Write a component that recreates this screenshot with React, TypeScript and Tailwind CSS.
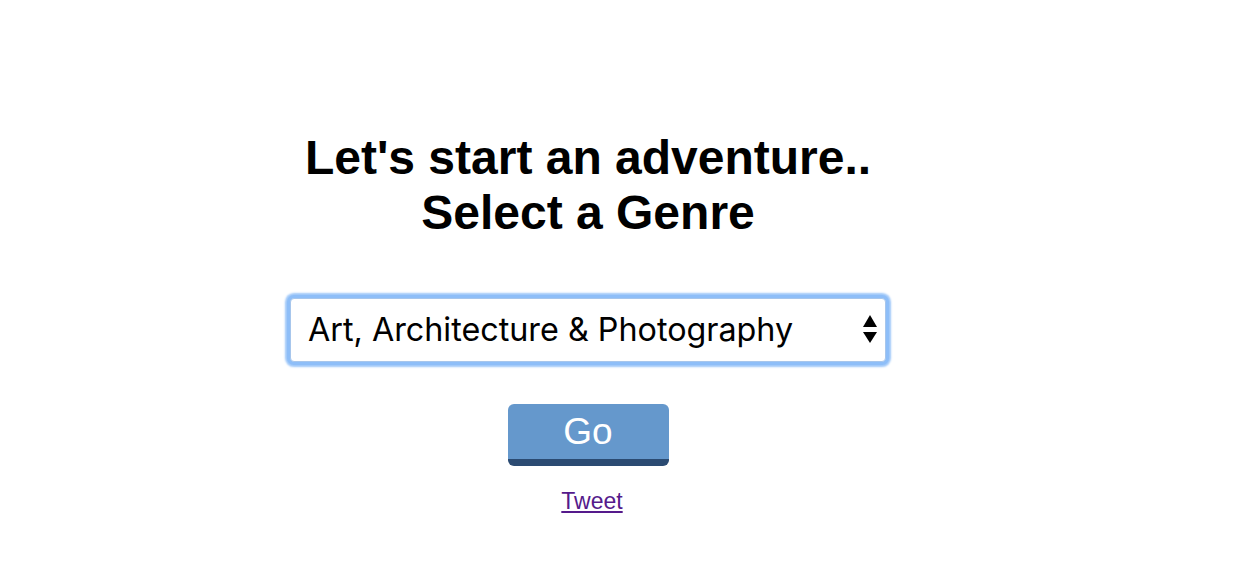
const GENRES = [
  'Art, Architecture & Photography',
  'Biography & Memoir',
  'Business & Economics',
  'Fantasy',
  'History',
  'Mystery & Thriller',
  'Romance',
  'Science Fiction',
]

export default function App() {
  return (
    <div className="min-h-[588px] w-full bg-white font-['Liberation_Sans',Arial,sans-serif] text-black">
      <div className="w-[1176px] flex flex-col items-center pt-[130px]">
        {/* Heading */}
        <h1 className="text-[48px] leading-[1.15] font-bold text-center">
          Let's start an adventure..
          <br />
          Select a Genre
        </h1>

        {/* Genre select */}
        <div className="relative mt-[58px] w-[596px] h-[64px]">
          <select
            defaultValue={GENRES[0]}
            className="appearance-none w-full h-full rounded-[4px] border border-[#a7c6ec] bg-white pl-[17px] pr-10 text-[32.3px] font-['Inter',sans-serif] text-black outline-none shadow-[0_0_0_3px_#8ebef8,0_0_2px_5px_#9fc8f9]"
          >
            {GENRES.map(g => (
              <option key={g}>{g}</option>
            ))}
          </select>
          <svg
            className="absolute right-[9px] top-[17px] pointer-events-none"
            width="14"
            height="28"
            viewBox="0 0 14 28"
          >
            <path d="M7 0 L14 12 L0 12 Z" fill="#000" />
            <path d="M0 17 L14 17 L7 28 Z" fill="#000" />
          </svg>
        </div>

        {/* Go button */}
        <button className="mt-[42px] w-[161px] h-[62px] rounded-[6px] bg-[#6598cc] border-b-[7px] border-[#2b4b72] text-white text-[37px] leading-none flex items-center justify-center">
          Go
        </button>

        {/* Tweet */}
        <a href="#" className="mt-[22px] ml-[8px] text-[23px] leading-[1.15] text-[#551a8b] underline">
          Tweet
        </a>
      </div>
    </div>
  )
}
